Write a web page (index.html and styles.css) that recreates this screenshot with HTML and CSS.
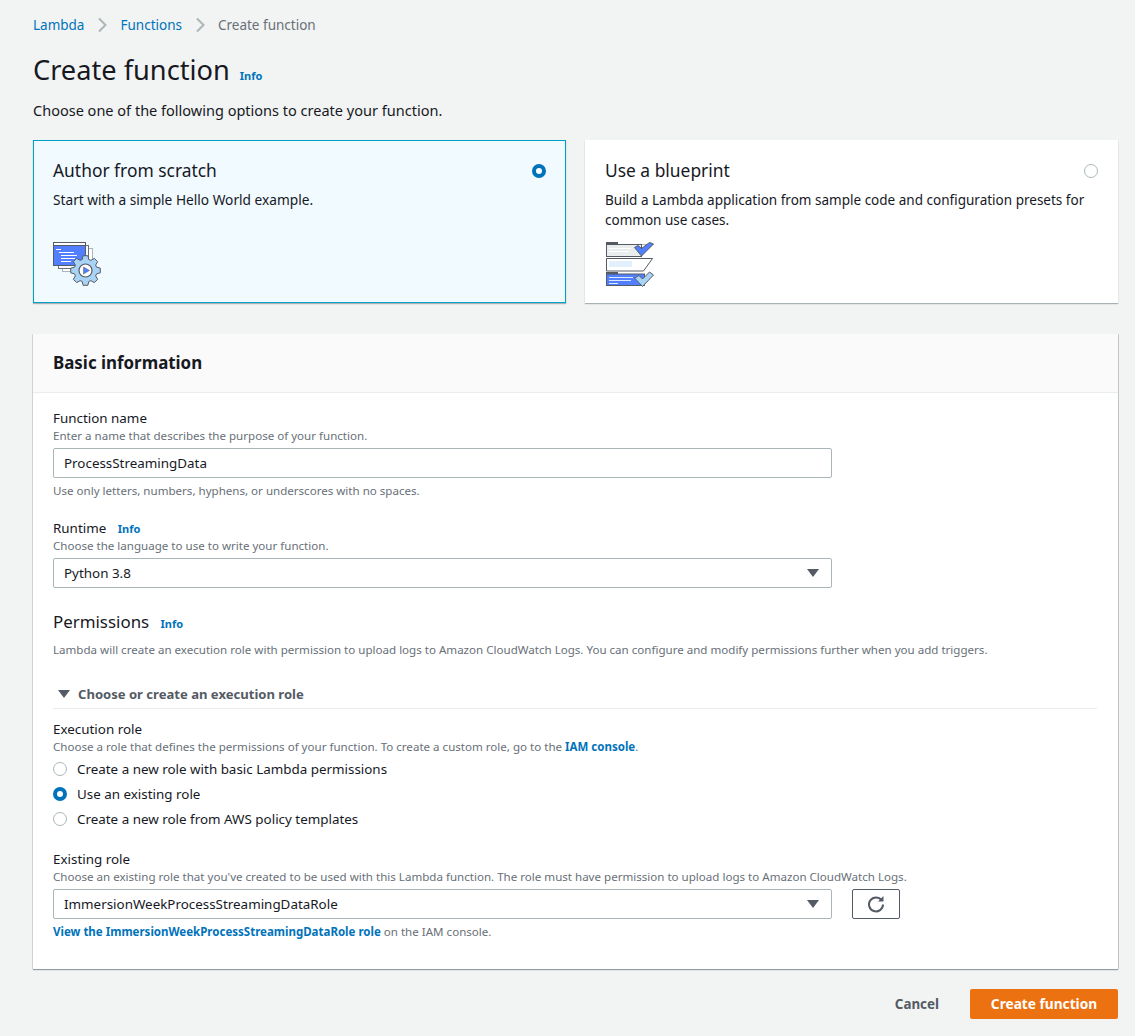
FILE: index.html
```html
<!DOCTYPE html>
<html lang="en">
<head>
<meta charset="utf-8">
<title>Create function</title>
<link rel="stylesheet" href="styles.css">
</head>
<body>
<div class="page">
  <nav class="crumbs">
    <a class="link">Lambda</a>
    <svg class="chev" width="9" height="16" viewBox="0 0 9 16"><path d="M1 1.500 7.500 8 1 14.500" fill="none" stroke="#aab7b8" stroke-width="2"/></svg>
    <a class="link">Functions</a>
    <svg class="chev" width="9" height="16" viewBox="0 0 9 16"><path d="M1 1.500 7.500 8 1 14.500" fill="none" stroke="#aab7b8" stroke-width="2"/></svg>
    <span class="crumb-current">Create function</span>
  </nav>
  <div class="title-row"><h1>Create function</h1><a class="info">Info</a></div>
  <p class="intro">Choose one of the following options to create your function.</p>

  <div class="cards">
    <section class="card card-on">
      <div class="card-head"><h2>Author from scratch</h2><span class="radio radio-on"></span></div>
      <p class="card-text">Start with a simple Hello World example.</p>
      <svg class="card-icon" width="50" height="46" viewBox="0 0 50 46">
        <rect x="9.500" y="6.500" width="30" height="23" fill="#fff" stroke="#aab7b8"/>
        <rect x="5.500" y="3.500" width="30" height="23" fill="#fff" stroke="#687078"/>
        <rect x="0.500" y="0.500" width="32" height="23" fill="#527fff" stroke="#545b64"/>
        <rect x="0.500" y="0.500" width="32" height="3" fill="#fff" stroke="#545b64"/>
        <path d="M3 7.500h5M6 10.500h15M8 13.500h16M8 16.500h14M8 19.500h10" stroke="#fff"/>
        <polygon transform="translate(32.500 28.500)" points="11,-3.360 14.800,-2.350 14.800,2.350 11,3.360 10.150,5.400 12.140,8.820 8.820,12.140 5.400,10.150 3.360,11 2.350,14.800 -2.350,14.800 -3.360,11 -5.400,10.150 -8.820,12.140 -12.140,8.820 -10.150,5.400 -11,3.360 -14.800,2.350 -14.800,-2.350 -11,-3.360 -10.150,-5.400 -12.140,-8.820 -8.820,-12.140 -5.400,-10.150 -3.360,-11 -2.350,-14.800 2.350,-14.800 3.360,-11 5.400,-10.150 8.820,-12.140 12.140,-8.820 10.150,-5.400" fill="#a9d3f5" stroke="#545b64"/>
        <circle cx="32.500" cy="28.500" r="6.500" fill="#fff" stroke="#545b64" stroke-width="1.200"/>
        <path d="M30.500 25v7l6-3.500z" fill="#527fff" stroke="#545b64" stroke-width=".5"/>
      </svg>
    </section>
    <section class="card">
      <div class="card-head"><h2>Use a blueprint</h2><span class="radio"></span></div>
      <p class="card-text card-text-long">Build a Lambda application from sample code and configuration presets for common use cases.</p>
      <svg class="card-icon" width="48" height="46" viewBox="0 0 48 46">
        <path d="M0 2.500h46M0 16.500h47" stroke="#aab7b8"/>
        <path d="M0 1h12M0 31h12" stroke="#545b64" stroke-width="2"/>
        <rect x=".5" y="2.500" width="35" height="12" fill="#eaeded" stroke="#545b64"/>
        <path d="M3 6.500h22M3 9.500h20" stroke="#fff"/>
        <polygon points="28.500,5.500 35.500,14 47.500,2 43.500,.5 35.500,6.500 32,3.500" fill="#527fff" stroke="#545b64"/>
        <path d="M.5 16.500h46l-9 12.500H.5z" fill="#fff" stroke="#545b64"/>
        <rect x="3" y="19" width="23" height="6" fill="#e1f0fc"/>
        <rect x=".5" y="32" width="38" height="11.500" fill="#527fff" stroke="#545b64"/>
        <path d="M3 35.500h24M3 38.500h22M3 41.500h9" stroke="#dbe6ff"/>
        <polygon points="28.500,36 36.500,44.500 47.500,33 43.500,30 36.500,37 33,33.500" fill="#a9d3f5" stroke="#545b64"/>
      </svg>
    </section>
  </div>

  <section class="panel">
    <header class="panel-head"><h2>Basic information</h2></header>
    <div class="panel-body">
      <div class="field">
        <div class="label">Function name</div>
        <div class="hint">Enter a name that describes the purpose of your function.</div>
        <div class="control">ProcessStreamingData</div>
        <div class="hint hint-after">Use only letters, numbers, hyphens, or underscores with no spaces.</div>
      </div>
      <div class="field field-runtime">
        <div class="label">Runtime <a class="info info-label">Info</a></div>
        <div class="hint">Choose the language to use to write your function.</div>
        <div class="control control-select">Python 3.8<span class="caret"></span></div>
      </div>
      <div class="perm">
        <h3>Permissions <a class="info info-perm">Info</a></h3>
        <p class="hint">Lambda will create an execution role with permission to upload logs to Amazon CloudWatch Logs. You can configure and modify permissions further when you add triggers.</p>
      </div>
      <div class="expander"><span class="caret caret-dark"></span>Choose or create an execution role</div>
      <div class="field field-role">
        <div class="label">Execution role</div>
        <div class="hint">Choose a role that defines the permissions of your function. To create a custom role, go to the <a class="strong-link">IAM console</a>.</div>
        <div class="radios">
          <label class="opt"><span class="radio"></span>Create a new role with basic Lambda permissions</label>
          <label class="opt"><span class="radio radio-on"></span>Use an existing role</label>
          <label class="opt"><span class="radio"></span>Create a new role from AWS policy templates</label>
        </div>
      </div>
      <div class="field field-existing">
        <div class="label">Existing role</div>
        <div class="hint">Choose an existing role that you've created to be used with this Lambda function. The role must have permission to upload logs to Amazon CloudWatch Logs.</div>
        <div class="select-row">
          <div class="control control-select">ImmersionWeekProcessStreamingDataRole<span class="caret"></span></div>
          <button class="refresh" type="button" aria-label="Refresh">
            <svg width="18" height="18" viewBox="0 0 18 18"><path d="M14.600 5.200A7 7 0 1 0 16 9.500" fill="none" stroke="#545b64" stroke-width="2"/><path d="M11 6.500h5.500V1z" fill="#545b64"/></svg>
          </button>
        </div>
        <div class="hint hint-view"><a class="strong-link">View the ImmersionWeekProcessStreamingDataRole role</a> on the IAM console.</div>
      </div>
    </div>
  </section>

  <div class="actions">
    <button class="btn-cancel" type="button">Cancel</button>
    <button class="btn-primary" type="button">Create function</button>
  </div>
</div>
</body>
</html>
```
FILE: styles.css
```css
* { box-sizing: border-box; }
html, body { margin: 0; padding: 0; }
body {
  background: #f2f3f3;
  color: #16191f;
  font-family: "Noto Sans", "Open Sans", sans-serif;
  font-size: 13.400px;
  line-height: 20px;
}
.page { width: 1135px; height: 1036px; padding: 15px 17px 0 33px; overflow: hidden; }
.link { color: #0073bb; }
.crumbs { display: flex; align-items: center; height: 20px; font-size: 13.500px; }
.chev { margin: 0 13px 0 14px; }
.crumb-current { color: #687078; }
.title-row { display: flex; align-items: baseline; margin-top: 12px; height: 46px; }
h1 { margin: 0; font-size: 27.200px; font-weight: 400; line-height: 45px; }
.info { color: #0073bb; font-size: 11px; font-weight: 700; }
.title-row .info { margin-left: 10px; }
.intro { margin: 7px 0 0; height: 20px; font-size: 14.530px; }
.cards { display: grid; grid-template-columns: 533px 533px; gap: 19px; margin-top: 20px; }
.card { position: relative; height: 163px; background: #fff; padding: 18px 20px 0; box-shadow: 0 1px 1px rgba(0,28,36,.3); }
.card-on { background: #f1faff; border: 1px solid #00a1c9; padding: 17px 19px 0; }
.card-head { display: flex; justify-content: space-between; align-items: center; height: 24px; }
.card-head .radio { margin-top: 2px; }
.card h2 { margin: 0; font-size: 17.400px; font-weight: 400; line-height: 22px; }
.card-text { margin: 8px 0 0; width: 493px; font-size: 13.700px; }
.card-text-long { font-size: 13.530px; }
.card-icon { position: absolute; left: 21px; bottom: 15px; }
.card-on .card-icon { left: 19px; bottom: 14px; }
.radio { flex: none; display: inline-block; width: 14px; height: 14px; border-radius: 50%; background: #fff; border: 1px solid #aab7b8; }
.radio-on { border: 4px solid #0073bb; }
.panel { margin-top: 31px; height: 635px; background: #fff; box-shadow: 0 1px 1px rgba(0,28,36,.4), 1px 0 0 rgba(0,28,36,.15), -1px 0 0 rgba(0,28,36,.08); }
.panel-head { height: 59px; background: #fafafa; border-bottom: 1px solid #eaeded; padding: 17px 20px 0; }
.panel-head h2 { margin: 0; font-size: 16.900px; font-weight: 700; line-height: 24px; }
.panel-body { padding: 15px 21px 0 20px; }
.label { line-height: 20px; }
.hint { margin: 0; color: #687078; font-size: 11.570px; line-height: 16px; }
.control { position: relative; width: 779px; height: 30px; margin-top: 4px; padding: 0 10px; background: #fff; border: 1px solid #aab7b8; border-radius: 2px; line-height: 28px; }
.hint-after { margin-top: 5px; }
.field-runtime { margin-top: 19px; }
.field-runtime .hint { margin-top: -1px; }
.caret { display: inline-block; width: 0; height: 0; border-left: 6px solid transparent; border-right: 6px solid transparent; border-top: 8px solid #545b64; }
.control-select .caret { position: absolute; right: 12px; top: 10px; }
.perm { margin-top: 22px; }
.perm h3 { margin: 0 0 6px; font-size: 16.900px; font-weight: 400; line-height: 24px; }
.info-label { margin-left: 8px; }
.info-perm { margin-left: 7px; }
.expander { display: flex; align-items: center; margin-top: 23px; height: 28px; padding: 0 0 1px 5px; border-bottom: 1px solid #eaeded; color: #545b64; font-size: 13.070px; font-weight: 700; }
.caret-dark { margin-right: 8px; }
.field-role { margin-top: 10px; }
.strong-link { color: #0073bb; font-weight: 700; font-size: 11.500px; }
.radios { margin-top: 1px; }
.opt { display: flex; align-items: center; height: 25px; }
.opt .radio { margin-right: 10px; }
.field-existing { margin-top: 18px; }
.select-row { display: flex; gap: 20px; align-items: center; }
.refresh { display: flex; align-items: center; justify-content: center; width: 48px; height: 30px; margin-top: 4px; padding: 0; background: #fff; border: 1px solid #545b64; border-radius: 2px; }
.hint-view { margin-top: 5px; }
.actions { display: flex; justify-content: flex-end; align-items: center; gap: 31px; margin-top: 20px; }
.btn-cancel { border: 0; background: none; color: #545b64; font: 700 13.400px/20px "Noto Sans", sans-serif; padding: 0; }
.btn-primary { width: 148px; height: 30px; border: 0; border-radius: 2px; background: #ec7211; color: #fff; font: 700 13.700px/20px "Noto Sans", sans-serif; padding: 0; }
```
